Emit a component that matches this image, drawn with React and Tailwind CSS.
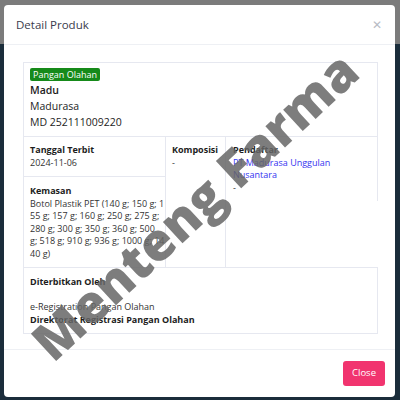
import React from 'react';

const kemasan = [
  'Botol Plastik PET (140 g; 150 g; 1',
  '55 g; 157 g; 160 g; 250 g; 275 g;',
  '280 g; 300 g; 350 g; 360 g; 500',
  'g; 518 g; 910 g; 936 g; 1000 g; 14',
  '40 g)',
];

const App = () => {
  return (
    <div
      className="relative w-[400px] h-[400px] overflow-hidden bg-[#1b2d3b]"
      style={{ fontFamily: '"Open Sans", "Noto Sans", sans-serif' }}
    >
      <div className="absolute inset-x-0 top-0 h-[44px] bg-[#7b7b7b]" />

      <div className="absolute left-[4px] top-[5px] w-[391px] h-[392px] bg-white rounded-[4px] flex flex-col">
        {/* header */}
        <div className="h-[40px] shrink-0 flex items-center justify-between px-[12px] border-b border-[#eef0f4]">
          <span className="text-[11.5px] text-[#3a3b4c]">Detail Produk</span>
          <span className="text-[#b8bcc4] text-[12px] leading-none mr-[1px]">✕</span>
        </div>

        {/* body */}
        <div className="flex-1 min-h-0 pl-[19px] pr-[17px] pt-[17px] text-[#1d1d1d]">
          <div className="border border-[#e6e8f0] px-[6px] pt-[5px] pb-[6px]">
            <div className="w-fit bg-[#168a1a] text-white text-[9px] leading-[13px] px-[3px] rounded-[2px]">
              Pangan Olahan
            </div>
            <div className="text-[10.5px] font-semibold leading-[16px] mt-[1px]">Madu</div>
            <div className="text-[10.5px] leading-[16px]">Madurasa</div>
            <div className="text-[10.5px] leading-[16px]">MD 252111009220</div>
          </div>

          <div className="grid grid-cols-[143px_60px_1fr] text-[9px] leading-[12.5px]">
            <div className="flex flex-col border-x border-[#e6e8f0]">
              <div className="px-[6px] pt-[7px] pb-[7px] border-b border-[#e6e8f0]">
                <div className="font-bold">Tanggal Terbit</div>
                <div className="text-[#333]">2024-11-06</div>
              </div>
              <div className="px-[6px] pt-[8px] pb-[7px]">
                <div className="font-bold">Kemasan</div>
                <div className="text-[#333]">
                  {kemasan.map((line) => (
                    <div key={line} className="whitespace-nowrap">{line}</div>
                  ))}
                </div>
              </div>
            </div>
            <div className="px-[6px] pt-[7px] border-r border-[#e6e8f0]">
              <div className="font-bold">Komposisi</div>
              <div className="text-[#333]">-</div>
            </div>
            <div className="self-start pl-[7px] pr-[4px] pt-[7px] pb-[7px] border-r border-[#e6e8f0]">
              <div className="font-bold">Pendaftar</div>
              <div className="text-[#3434f0] w-[120px]">PT Madurasa Unggulan Nusantara</div>
              <div className="text-[#333]">-</div>
            </div>
          </div>

          <div className="px-[6px] pt-[8px] pb-[7px] border border-[#e6e8f0] text-[9px] leading-[12.5px]">
            <div className="font-bold">Diterbitkan Oleh</div>
            <div className="h-[12.5px]" />
            <div className="text-[#333]">e-Registration Pangan Olahan</div>
            <div className="font-bold">Direktorat Registrasi Pangan Olahan</div>
          </div>
        </div>

        {/* footer */}
        <div className="h-[48px] shrink-0 border-t border-[#eef0f4] flex items-center justify-end px-[10px]">
          <button className="w-[42px] h-[25px] rounded-[3px] bg-[#f1346f] text-white text-[9.5px]">Close</button>
        </div>
      </div>

      {/* watermark */}
      <div className="absolute left-[194px] top-[205px] pointer-events-none">
        <div className="-translate-x-1/2 -translate-y-1/2 -rotate-[43deg] whitespace-nowrap text-[52px] font-extrabold text-[#666]/85 leading-none">
          Menteng Farma
        </div>
      </div>
    </div>
  );
};

export default App;
